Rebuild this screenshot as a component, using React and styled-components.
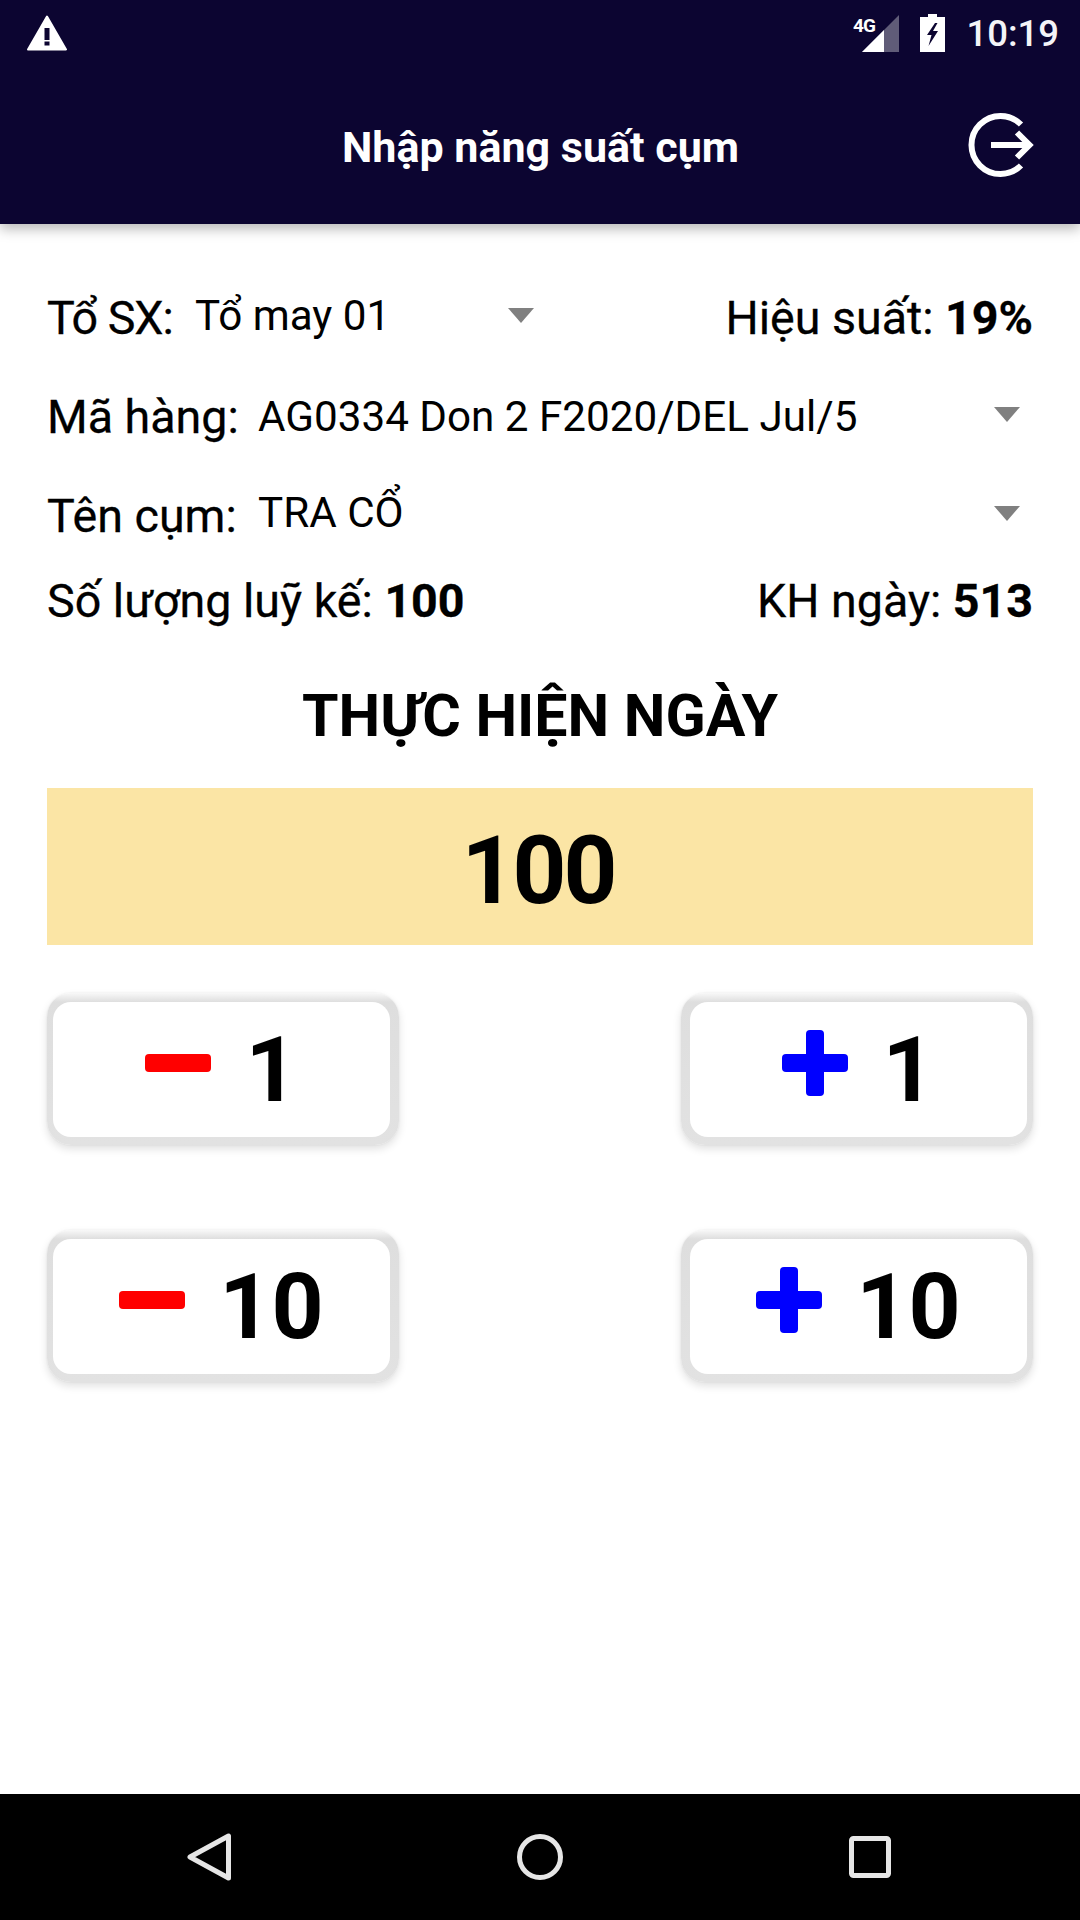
import React from "react";
import styled, { createGlobalStyle } from "styled-components";

const GlobalStyle = createGlobalStyle`
  html, body { margin: 0; padding: 0; background: #fff; }
  body { font-family: Roboto, "Noto Sans", sans-serif; color: #000; }
`;

const Page = styled.div`
  width: 1080px;
  height: 1920px;
  display: flex;
  flex-direction: column;
  overflow: hidden;
`;

const Header = styled.header`
  height: 224px;
  flex: none;
  background: #0c0531;
  box-shadow: 0 5px 12px rgba(0, 0, 0, 0.28);
  display: flex;
  flex-direction: column;
  z-index: 1;
`;

const StatusBar = styled.div`
  height: 66px;
  display: flex;
  align-items: center;
  padding: 0 21px 0 27px;
`;

const StatusRight = styled.div`
  margin-left: auto;
  display: flex;
  align-items: center;
  gap: 21px;
`;

const Clock = styled.span`
  font-size: 36.5px;
  font-weight: 500;
  color: #f4f4f8;
`;

const TitleBar = styled.div`
  flex: 1;
  display: flex;
  align-items: center;
  padding: 2px 46px 0 0;
`;

const Title = styled.h1`
  flex: 1;
  margin: 2px 0 0 113px;
  text-align: center;
  font-size: 43px;
  font-weight: 700;
  color: #fff;
`;

const Content = styled.main`
  flex: 1;
  padding: 44px 47px 0;
  display: flex;
  flex-direction: column;
`;

const Row = styled.div`
  height: ${(p) => p.$height}px;
  display: flex;
  align-items: center;
  justify-content: space-between;
  font-size: 46.6px;
`;

const Label = styled.span`
  flex: none;
  white-space: nowrap;
  width: ${(p) => (p.$width ? `${p.$width}px` : "auto")};
  letter-spacing: ${(p) => p.$spacing || 0}px;
  -webkit-text-stroke: 0.3px #000;
  b { font-weight: 700; }
`;

const Select = styled.div`
  display: flex;
  align-items: center;
  justify-content: space-between;
  padding-right: ${(p) => (p.$wide ? 13 : 0)}px;
  flex: ${(p) => (p.$wide ? 1 : "none")};
  width: ${(p) => (p.$wide ? "auto" : "339px")};
  margin-right: auto;
`;

const SelectText = styled.span`
  font-size: 42.2px;
  margin-bottom: ${(p) => p.$lift}px;
`;

const Caret = styled.i`
  display: block;
  width: 0;
  height: 0;
  border-left: 13px solid transparent;
  border-right: 13px solid transparent;
  border-top: 15px solid #808080;
  margin-bottom: 4px;
`;

const Heading = styled.h2`
  margin: 33px 0 0;
  height: 92px;
  line-height: 92px;
  text-align: center;
  font-size: 59px;
  font-weight: 700;
`;

const Total = styled.div`
  margin-top: 26px;
  height: 157px;
  box-sizing: border-box;
  padding: 9px 4px 0 0;
  background: #fbe5a5;
  display: flex;
  align-items: center;
  justify-content: center;
  font-size: 94px;
  font-weight: 700;
  letter-spacing: -3px;
`;

const Buttons = styled.div`
  margin-top: 48px;
  display: grid;
  grid-template-columns: 352px 352px;
  justify-content: space-between;
  row-gap: 85px;
`;

const StepFrame = styled.div`
  height: 152px;
  box-sizing: border-box;
  padding: ${(p) => (p.$plus ? "9px 6px 8px 9px" : "9px 9px 8px 6px")};
  border-radius: 24px;
  background: linear-gradient(#f8f8f8 0, #dedede 9px, #e2e2e2 100%);
  box-shadow: 0 4px 8px rgba(0, 0, 0, 0.12), 0 0 2px rgba(0, 0, 0, 0.08);
`;

const StepButton = styled.button`
  width: 100%;
  height: 100%;
  border: none;
  border-radius: 18px;
  background: #fff;
  padding: 0;
  display: flex;
  align-items: center;
  justify-content: center;
  gap: 34px;
  font-family: inherit;
  font-size: 91px;
  font-weight: 700;
  color: #000;
  svg { margin-bottom: 14px; }
`;

const NavBar = styled.nav`
  height: 126px;
  flex: none;
  background: #000;
  display: grid;
  grid-template-columns: repeat(3, 1fr);
  align-items: center;
`;

const NavSlot = styled.div`
  display: flex;
  justify-content: center;
  padding-left: ${(p) => p.$shiftLeft || 0}px;
  padding-right: ${(p) => p.$shiftRight || 0}px;
`;

const WarningIcon = () => (
  <svg width="40" height="36" viewBox="0 0 40 36">
    <path d="M20 1.5 L39 34.5 H1 Z" fill="#fff" stroke="#fff" strokeWidth="2" strokeLinejoin="round" />
    <rect x="17.5" y="13" width="5" height="12" fill="#0c0531" />
    <rect x="17.5" y="26.5" width="5" height="4" fill="#0c0531" />
  </svg>
);

const SignalIcon = () => (
  <svg width="46" height="38" viewBox="0 0 46 38">
    <path d="M46 1 V38 H9 Z" fill="#fff" opacity="0.35" />
    <path d="M31 16 V38 H9 Z" fill="#fff" />
    <text x="0" y="18" fontFamily="Roboto, sans-serif" fontWeight="700" fontSize="19" fill="#fff" textLength="23">4G</text>
  </svg>
);

const BatteryIcon = () => (
  <svg width="25" height="38" viewBox="0 0 25 38">
    <path d="M8 0 H17 V3 H25 V38 H0 V3 H8 Z" fill="#fff" />
    <path d="M15 9 L7 21 H11.5 L8.5 32 L18 17 H13 L17.5 9 Z" fill="#0c0531" />
  </svg>
);

const LogoutIcon = () => (
  <svg width="66" height="68" viewBox="0 0 66 68">
    <g fill="none" stroke="#fff" strokeWidth="6">
      <path d="M53 12.5 A29 29 0 1 0 53 53.5" />
      <path d="M23 33 H60" />
      <path d="M49 20.5 L61.5 33 L49 45.5" />
    </g>
  </svg>
);

const MinusIcon = () => (
  <svg width="66" height="66" viewBox="0 0 66 66">
    <rect x="0" y="24" width="66" height="18" rx="4" fill="#ff0000" />
  </svg>
);

const PlusIcon = () => (
  <svg width="66" height="66" viewBox="0 0 66 66">
    <rect x="0" y="24" width="66" height="18" rx="4" fill="#0000ff" />
    <rect x="24" y="0" width="18" height="66" rx="4" fill="#0000ff" />
  </svg>
);

const BackIcon = () => (
  <svg width="44" height="48" viewBox="0 0 44 48">
    <path d="M41.5 3 V45 L3 24 Z" fill="none" stroke="#e6e6e6" strokeWidth="5" strokeLinejoin="round" />
  </svg>
);

const HomeIcon = () => (
  <svg width="46" height="46" viewBox="0 0 46 46">
    <circle cx="23" cy="23" r="20.5" fill="none" stroke="#e6e6e6" strokeWidth="5" />
  </svg>
);

const RecentIcon = () => (
  <svg width="42" height="42" viewBox="0 0 42 42">
    <rect x="2.5" y="2.5" width="37" height="37" rx="2" fill="none" stroke="#e6e6e6" strokeWidth="5" />
  </svg>
);

const Step = ({ value, plus }) => (
  <StepFrame $plus={plus}>
    <StepButton>
      {plus ? <PlusIcon /> : <MinusIcon />}
      <span>{value}</span>
    </StepButton>
  </StepFrame>
);

export default function App() {
  return (
    <Page>
      <GlobalStyle />
      <Header>
        <StatusBar>
          <WarningIcon />
          <StatusRight>
            <SignalIcon />
            <BatteryIcon />
            <Clock>10:19</Clock>
          </StatusRight>
        </StatusBar>
        <TitleBar>
          <Title>Nhập năng suất cụm</Title>
          <LogoutIcon />
        </TitleBar>
      </Header>

      <Content>
        <Row $height={99}>
          <Label $width={148} $spacing={-1}>Tổ SX:</Label>
          <Select>
            <SelectText $lift={4}>Tổ may 01</SelectText>
            <Caret />
          </Select>
          <Label>Hiệu suất: <b>19%</b></Label>
        </Row>
        <Row $height={99}>
          <Label $width={211}>Mã hàng:</Label>
          <Select $wide>
            <SelectText $lift={0}>AG0334 Don 2 F2020/DEL Jul/5</SelectText>
            <Caret />
          </Select>
        </Row>
        <Row $height={99}>
          <Label $width={211}>Tên cụm:</Label>
          <Select $wide>
            <SelectText $lift={6}>TRA CỔ</SelectText>
            <Caret />
          </Select>
        </Row>
        <Row $height={72}>
          <Label>Số lượng luỹ kế: <b>100</b></Label>
          <Label>KH ngày: <b>513</b></Label>
        </Row>
        <Heading>THỰC HIỆN NGÀY</Heading>
        <Total>100</Total>
        <Buttons>
          <Step value="1" />
          <Step value="1" plus />
          <Step value="10" />
          <Step value="10" plus />
        </Buttons>
      </Content>

      <NavBar>
        <NavSlot $shiftLeft={58}><BackIcon /></NavSlot>
        <NavSlot><HomeIcon /></NavSlot>
        <NavSlot $shiftRight={60}><RecentIcon /></NavSlot>
      </NavBar>
    </Page>
  );
}
